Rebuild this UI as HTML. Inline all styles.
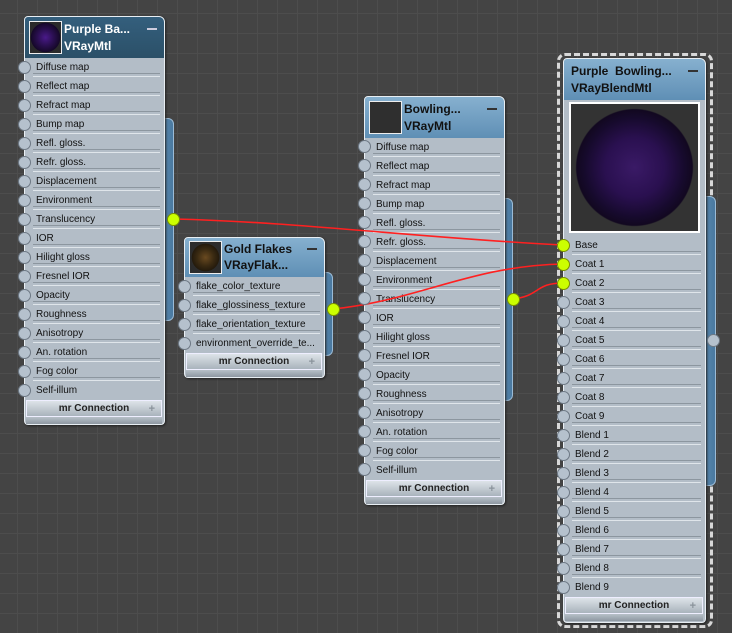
<!DOCTYPE html>
<html><head><meta charset="utf-8"><style>
*{margin:0;padding:0;box-sizing:border-box}
body{width:732px;height:633px;overflow:hidden;position:relative;font-family:"Liberation Sans",Arial,sans-serif;
background-color:#444;
background-image:linear-gradient(#4d4d4d 1px,transparent 1px),linear-gradient(90deg,#4d4d4d 1px,transparent 1px);
background-size:20px 20px;background-position:-3px -7px}
.node{position:absolute;background:#b3bdc7;border:1px solid #e8eef3;border-radius:4px 6px 4px 4px;box-shadow:1px 1px 2px #222}
.hd{position:absolute;left:0;right:0;top:0;border-radius:3px 5px 0 0;color:#111;font-weight:bold;font-size:12px}
.hd.dark{background:linear-gradient(#345f7d,#2b5068);color:#fff}
.hd.light{background:linear-gradient(#86b0cf,#5f8fb5)}
.hd .t{position:absolute;white-space:nowrap;line-height:18px}
.hd .mn{position:absolute;width:10px;height:2px;background:#333}
.hd.dark .mn{background:#ccd}
.thumb{position:absolute;border:1px solid #eee;background:#2f2f2f}
.row{position:absolute;left:0;right:0;height:19px;font-size:10px;color:#111;line-height:20px;padding-left:11px;white-space:nowrap;overflow:hidden}
.row:after{content:"";position:absolute;left:8px;right:4px;bottom:0;height:2px;border-top:1px solid #8c969f;border-bottom:1px solid #dfe5ea}
.row.last:after{display:none}
.mr{position:absolute;left:1px;right:2px;height:17px;background:linear-gradient(#dde3e8,#a9b3bc);font-size:10px;font-weight:bold;color:#222;text-align:center;line-height:16px;border:1px solid #eef}
.mr b{position:absolute;right:6px;top:0;color:#8a939b;font-size:11px}
.bot{position:absolute;left:1px;right:2px;height:7px;background:linear-gradient(#b7c0c8,#8e98a2)}
.sock{position:absolute;width:13px;height:13px;border-radius:50%;background:#b5c1cd;border:1px solid #6d7884}
.y{background:#ccff00;border-color:#7a9000}
.tab{position:absolute;background:linear-gradient(90deg,#5a8ab0,#4a79a0);border:1px solid #9bbbd6;border-radius:0 6px 6px 0}
</style></head><body>

<svg width="732" height="633" style="position:absolute;left:0;top:0;z-index:5;pointer-events:none">
<path d="M174 219 C 300 222, 420 238, 563 245" stroke="#ff2020" stroke-width="1.6" fill="none"/>
<path d="M333 309 C 420 300, 470 266, 563 264" stroke="#ff2020" stroke-width="1.6" fill="none"/>
<path d="M513 299 C 540 296, 535 283, 563 283" stroke="#ff2020" stroke-width="1.6" fill="none"/>
</svg>

<!-- Node 1 -->
<div class="tab" style="left:160px;top:118px;width:14px;height:203px"></div>
<div class="node" style="left:24px;top:16px;width:141px;height:409px">
 <div class="hd dark" style="height:41px">
  <div class="thumb" style="left:4px;top:4px;width:33px;height:33px;background:radial-gradient(circle 15px at 50% 50%,#4a1a8a,#2a0f50 55%,#150828 97%,#2a2a2a 100%)"></div>
  <div class="t" style="left:39px;top:3px">Purple Ba...</div>
  <div class="t" style="left:39px;top:20px">VRayMtl</div>
  <div class="mn" style="right:7px;top:11px"></div>
 </div>
 <div class="row" style="top:41px">Diffuse map</div>
 <div class="row" style="top:60px">Reflect map</div>
 <div class="row" style="top:79px">Refract map</div>
 <div class="row" style="top:98px">Bump map</div>
 <div class="row" style="top:117px">Refl. gloss.</div>
 <div class="row" style="top:136px">Refr. gloss.</div>
 <div class="row" style="top:155px">Displacement</div>
 <div class="row" style="top:174px">Environment</div>
 <div class="row" style="top:193px">Translucency</div>
 <div class="row" style="top:212px">IOR</div>
 <div class="row" style="top:231px">Hilight gloss</div>
 <div class="row" style="top:250px">Fresnel IOR</div>
 <div class="row" style="top:269px">Opacity</div>
 <div class="row" style="top:288px">Roughness</div>
 <div class="row" style="top:307px">Anisotropy</div>
 <div class="row" style="top:326px">An. rotation</div>
 <div class="row" style="top:345px">Fog color</div>
 <div class="row last" style="top:364px">Self-illum</div>
 <div class="mr" style="top:383px">mr Connection<b>+</b></div>
 <div class="bot" style="top:400px"></div>
</div>

<!-- Node 2 -->
<div class="tab" style="left:319px;top:272px;width:14px;height:84px"></div>
<div class="node" style="left:184px;top:237px;width:141px;height:141px">
 <div class="hd light" style="height:39px">
  <div class="thumb" style="left:4px;top:3px;width:33px;height:33px;background:radial-gradient(circle 14px at 50% 50%,#6a4a20,#3a2a12 60%,#241a0c 97%,#2c2c2c 100%)"></div>
  <div class="t" style="left:39px;top:2px">Gold Flakes</div>
  <div class="t" style="left:39px;top:18px">VRayFlak...</div>
  <div class="mn" style="right:7px;top:10px"></div>
 </div>
 <div class="row" style="top:39px">flake_color_texture</div>
 <div class="row" style="top:58px">flake_glossiness_texture</div>
 <div class="row" style="top:77px">flake_orientation_texture</div>
 <div class="row last" style="top:96px">environment_override_te...</div>
 <div class="mr" style="top:115px">mr Connection<b>+</b></div>
 <div class="bot" style="top:132px"></div>
</div>

<!-- Node 3 -->
<div class="tab" style="left:499px;top:198px;width:14px;height:203px"></div>
<div class="node" style="left:364px;top:96px;width:141px;height:409px">
 <div class="hd light" style="height:41px">
  <div class="thumb" style="left:4px;top:4px;width:33px;height:33px"></div>
  <div class="t" style="left:39px;top:3px">Bowling...</div>
  <div class="t" style="left:39px;top:20px">VRayMtl</div>
  <div class="mn" style="right:7px;top:11px"></div>
 </div>
 <div class="row" style="top:41px">Diffuse map</div>
 <div class="row" style="top:60px">Reflect map</div>
 <div class="row" style="top:79px">Refract map</div>
 <div class="row" style="top:98px">Bump map</div>
 <div class="row" style="top:117px">Refl. gloss.</div>
 <div class="row" style="top:136px">Refr. gloss.</div>
 <div class="row" style="top:155px">Displacement</div>
 <div class="row" style="top:174px">Environment</div>
 <div class="row" style="top:193px">Translucency</div>
 <div class="row" style="top:212px">IOR</div>
 <div class="row" style="top:231px">Hilight gloss</div>
 <div class="row" style="top:250px">Fresnel IOR</div>
 <div class="row" style="top:269px">Opacity</div>
 <div class="row" style="top:288px">Roughness</div>
 <div class="row" style="top:307px">Anisotropy</div>
 <div class="row" style="top:326px">An. rotation</div>
 <div class="row" style="top:345px">Fog color</div>
 <div class="row last" style="top:364px">Self-illum</div>
 <div class="mr" style="top:383px">mr Connection<b>+</b></div>
 <div class="bot" style="top:400px"></div>
</div>

<!-- Node 4 -->
<div style="position:absolute;left:557px;top:53px;width:156px;height:575px;border:3px dashed #d8d8d8;border-radius:8px"></div>
<div class="tab" style="left:701px;top:196px;width:15px;height:290px"></div>
<div class="node" style="left:563px;top:58px;width:143px;height:565px">
 <div class="hd light" style="height:41px">
  <div class="t" style="left:7px;top:3px">Purple&nbsp; Bowling...</div>
  <div class="t" style="left:7px;top:20px">VRayBlendMtl</div>
  <div class="mn" style="right:7px;top:11px"></div>
 </div>
 <div class="thumb" style="left:5px;top:43px;width:131px;height:131px;border:2px solid #fff;background:radial-gradient(circle 59px at 50% 50%,#3a1a66,#2a1050 50%,#160a2c 85%,#120820 98%,#333 100%)"></div>
 <div class="row" style="top:177px">Base</div>
 <div class="row" style="top:196px">Coat 1</div>
 <div class="row" style="top:215px">Coat 2</div>
 <div class="row" style="top:234px">Coat 3</div>
 <div class="row" style="top:253px">Coat 4</div>
 <div class="row" style="top:272px">Coat 5</div>
 <div class="row" style="top:291px">Coat 6</div>
 <div class="row" style="top:310px">Coat 7</div>
 <div class="row" style="top:329px">Coat 8</div>
 <div class="row" style="top:348px">Coat 9</div>
 <div class="row" style="top:367px">Blend 1</div>
 <div class="row" style="top:386px">Blend 2</div>
 <div class="row" style="top:405px">Blend 3</div>
 <div class="row" style="top:424px">Blend 4</div>
 <div class="row" style="top:443px">Blend 5</div>
 <div class="row" style="top:462px">Blend 6</div>
 <div class="row" style="top:481px">Blend 7</div>
 <div class="row" style="top:500px">Blend 8</div>
 <div class="row last" style="top:519px">Blend 9</div>
 <div class="mr" style="top:538px">mr Connection<b>+</b></div>
 <div class="bot" style="top:555px"></div>
</div>

<!-- sockets -->
<div style="position:absolute;left:0;top:0;z-index:6">
<div class="sock" style="left:18px;top:61px"></div><div class="sock" style="left:18px;top:80px"></div><div class="sock" style="left:18px;top:99px"></div><div class="sock" style="left:18px;top:118px"></div><div class="sock" style="left:18px;top:137px"></div><div class="sock" style="left:18px;top:156px"></div><div class="sock" style="left:18px;top:175px"></div><div class="sock" style="left:18px;top:194px"></div><div class="sock" style="left:18px;top:213px"></div><div class="sock" style="left:18px;top:232px"></div><div class="sock" style="left:18px;top:251px"></div><div class="sock" style="left:18px;top:270px"></div><div class="sock" style="left:18px;top:289px"></div><div class="sock" style="left:18px;top:308px"></div><div class="sock" style="left:18px;top:327px"></div><div class="sock" style="left:18px;top:346px"></div><div class="sock" style="left:18px;top:365px"></div><div class="sock" style="left:18px;top:384px"></div>
<div class="sock y" style="left:167px;top:213px"></div>

<div class="sock" style="left:178px;top:280px"></div><div class="sock" style="left:178px;top:299px"></div><div class="sock" style="left:178px;top:318px"></div><div class="sock" style="left:178px;top:337px"></div>
<div class="sock y" style="left:327px;top:303px"></div>

<div class="sock" style="left:358px;top:140px"></div><div class="sock" style="left:358px;top:159px"></div><div class="sock" style="left:358px;top:178px"></div><div class="sock" style="left:358px;top:197px"></div><div class="sock" style="left:358px;top:216px"></div><div class="sock" style="left:358px;top:235px"></div><div class="sock" style="left:358px;top:254px"></div><div class="sock" style="left:358px;top:273px"></div><div class="sock" style="left:358px;top:292px"></div><div class="sock" style="left:358px;top:311px"></div><div class="sock" style="left:358px;top:330px"></div><div class="sock" style="left:358px;top:349px"></div><div class="sock" style="left:358px;top:368px"></div><div class="sock" style="left:358px;top:387px"></div><div class="sock" style="left:358px;top:406px"></div><div class="sock" style="left:358px;top:425px"></div><div class="sock" style="left:358px;top:444px"></div><div class="sock" style="left:358px;top:463px"></div>
<div class="sock y" style="left:507px;top:293px"></div>

<div class="sock y" style="left:557px;top:239px"></div><div class="sock y" style="left:557px;top:258px"></div><div class="sock y" style="left:557px;top:277px"></div><div class="sock" style="left:557px;top:296px"></div><div class="sock" style="left:557px;top:315px"></div><div class="sock" style="left:557px;top:334px"></div><div class="sock" style="left:557px;top:353px"></div><div class="sock" style="left:557px;top:372px"></div><div class="sock" style="left:557px;top:391px"></div><div class="sock" style="left:557px;top:410px"></div><div class="sock" style="left:557px;top:429px"></div><div class="sock" style="left:557px;top:448px"></div><div class="sock" style="left:557px;top:467px"></div><div class="sock" style="left:557px;top:486px"></div><div class="sock" style="left:557px;top:505px"></div><div class="sock" style="left:557px;top:524px"></div><div class="sock" style="left:557px;top:543px"></div><div class="sock" style="left:557px;top:562px"></div><div class="sock" style="left:557px;top:581px"></div>
<div class="sock" style="left:707px;top:334px"></div>
</div>
</body></html>
